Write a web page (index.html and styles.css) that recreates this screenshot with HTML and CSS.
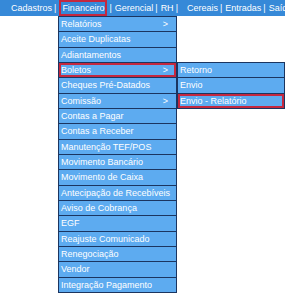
FILE: index.html
```html
<!DOCTYPE html>
<html lang="pt-BR">
<head>
    <meta charset="UTF-8">
    <title>Menu Financeiro</title>
    <link rel="stylesheet" href="styles.css">
</head>
<body>
    <div class="topbar">
        <span class="top-item">Cadastros</span>
        <span class="sep">|</span>
        <span class="top-item selected">Financeiro</span>
        <span class="sep">|</span>
        <span class="top-item">Gerencial</span>
        <span class="sep">|</span>
        <span class="top-item">RH</span>
        <span class="sep wide">|</span>
        <span class="top-item">Cereais</span>
        <span class="sep">|</span>
        <span class="top-item">Entradas</span>
        <span class="sep">|</span>
        <span class="top-item">Saídas</span>
    </div>

    <ul class="dropdown">
        <li class="has-sub">Relatórios <span class="arrow">&gt;</span></li>
        <li>Aceite Duplicatas</li>
        <li>Adiantamentos</li>
        <li class="has-sub selected">Boletos <span class="arrow">&gt;</span>
            <ul class="submenu">
                <li>Retorno</li>
                <li>Envio</li>
                <li class="selected">Envio - Relatório</li>
            </ul>
        </li>
        <li>Cheques Pré-Datados</li>
        <li class="has-sub">Comissão <span class="arrow">&gt;</span></li>
        <li>Contas a Pagar</li>
        <li>Contas a Receber</li>
        <li>Manutenção TEF/POS</li>
        <li>Movimento Bancário</li>
        <li>Movimento de Caixa</li>
        <li>Antecipação de Recebíveis</li>
        <li>Aviso de Cobrança</li>
        <li>EGF</li>
        <li>Reajuste Comunicado</li>
        <li>Renegociação</li>
        <li>Vendor</li>
        <li>Integração Pagamento</li>
    </ul>
</body>
</html>
```

FILE: styles.css
```css
body {
    margin: 0;
    background: #fff;
    font-family: "Liberation Sans", Arial, sans-serif;
    font-size: 9px;
    color: #fff;
}
.topbar {
    height: 16px;
    line-height: 16px;
    padding-left: 11px;
    background: #3689d8;
    white-space: nowrap;
    overflow: hidden;
    display: flex;
    align-items: center;
}
.top-item {
    line-height: 12px;
}
.top-item.selected {
    padding: 1px 1px 0;
    border: 2px solid #c4283f;
    line-height: 11px;
}
.sep {
    padding: 0 3px 0 2px;
}
.sep.wide {
    padding-right: 9px;
}
.dropdown {
    position: absolute;
    left: 58px;
    top: 16px;
    width: 117px;
    margin: 0;
    padding: 0;
    list-style: none;
    border: 1px solid #1b3560;
    border-bottom: 0;
}
.dropdown li {
    position: relative;
    height: 14.33px;
    line-height: 14.33px;
    padding-left: 2px;
    background: #5dabf0;
    border-bottom: 1px solid #1b3560;
    white-space: nowrap;
}
.dropdown li.selected {
    box-shadow: inset 0 0 0 2px #c4283f;
}
.arrow {
    position: absolute;
    right: 8px;
    top: 0;
}
.dropdown .submenu {
    position: absolute;
    left: 118px;
    top: -1px;
    width: 106px;
    margin: 0;
    padding: 0;
    list-style: none;
    border: 1px solid #1b3560;
    border-bottom: 0;
}
```
